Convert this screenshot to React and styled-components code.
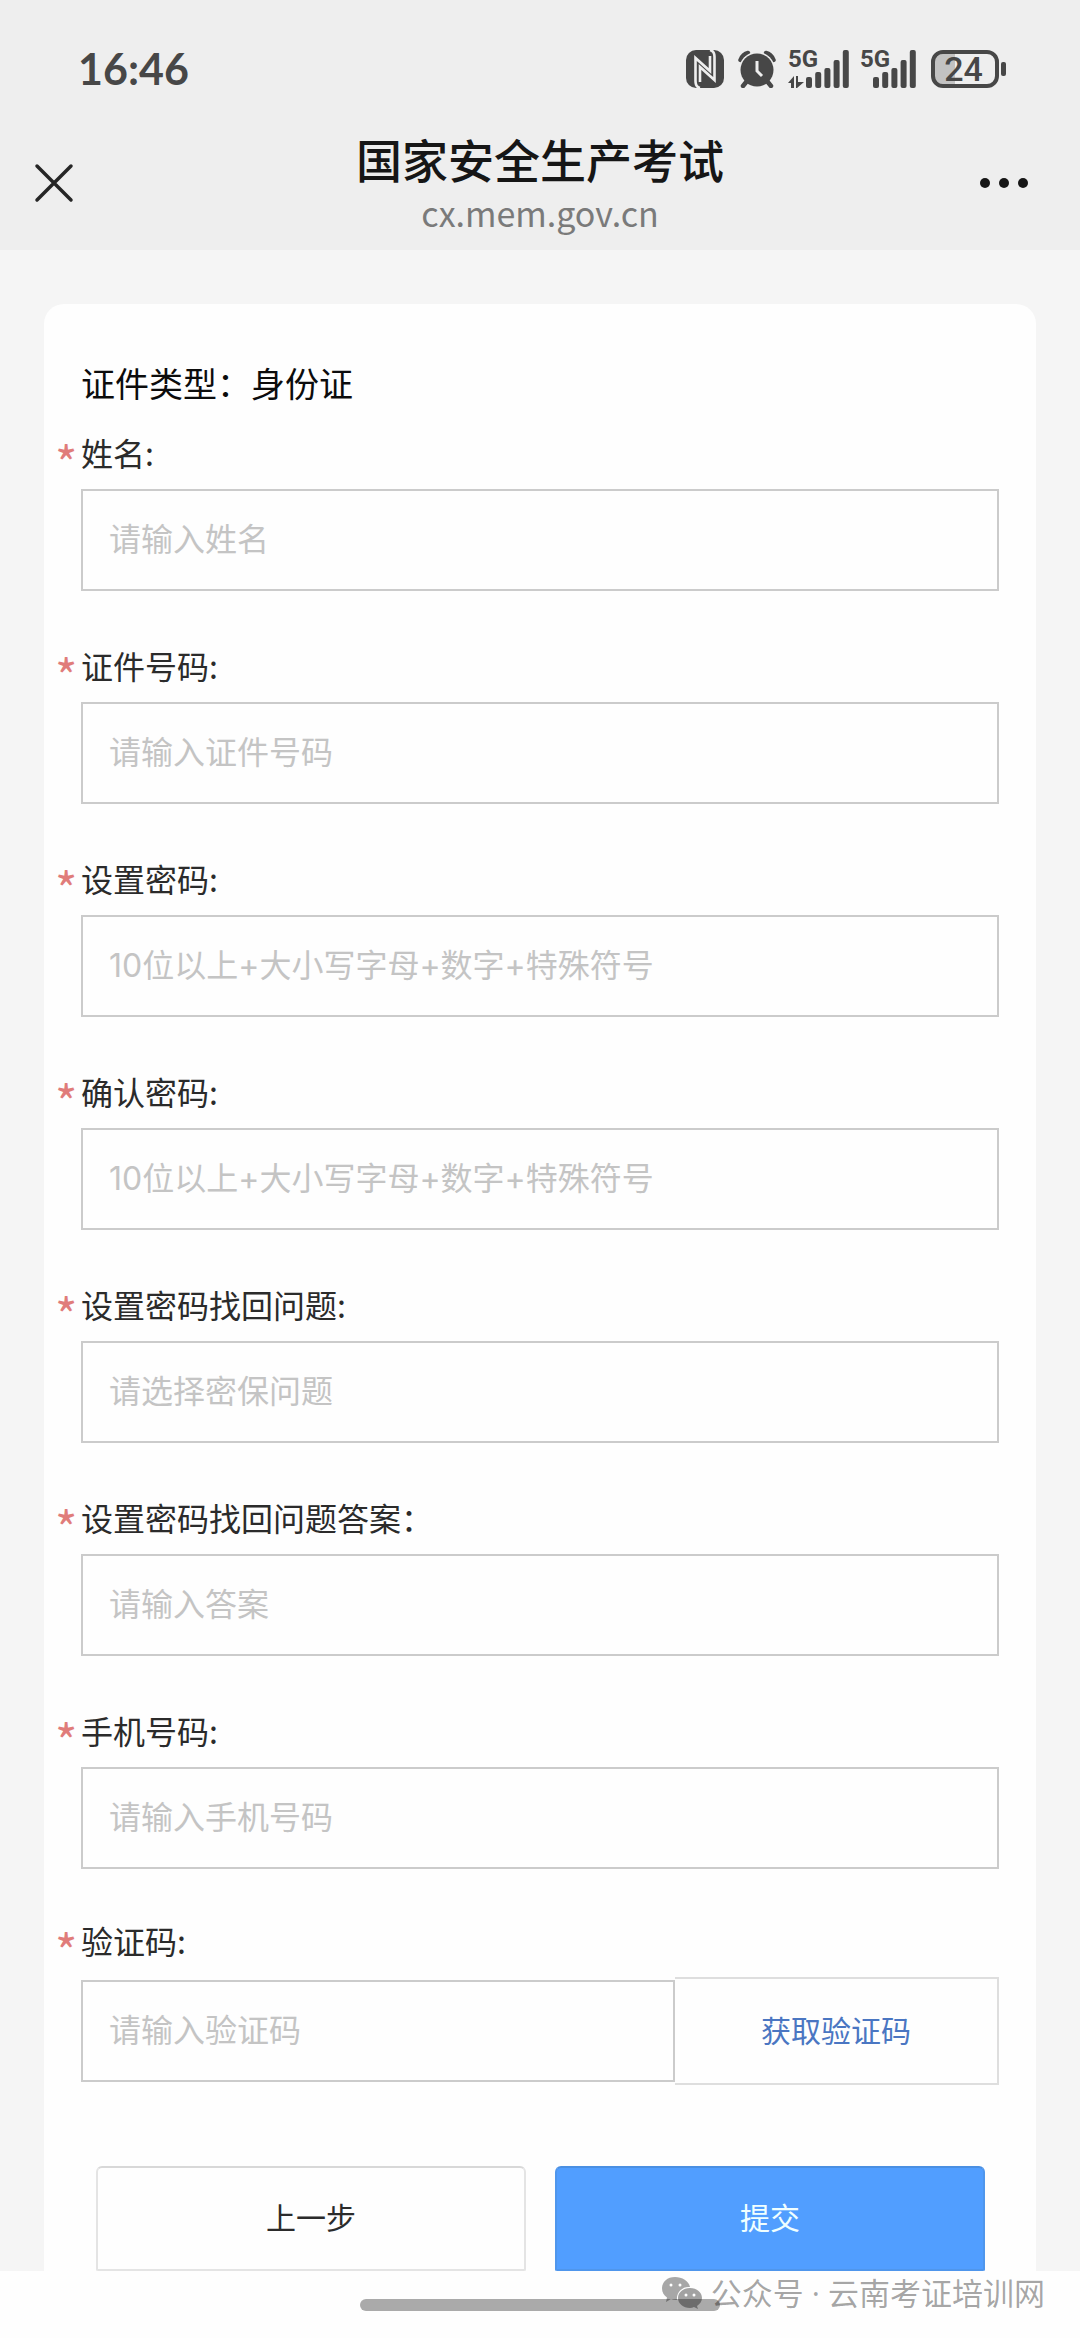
import React from "react";
import styled, { createGlobalStyle } from "styled-components";

const sans = `"Noto Sans CJK SC", "Noto Sans", sans-serif`;

const GlobalStyle = createGlobalStyle`
  *, *::before, *::after { box-sizing: border-box; }
  body { margin: 0; background: #fefefe; font-family: ${sans}; color: #2b2b2b; }
  button, input { font-family: inherit; margin: 0; }
`;

const Screen = styled.div`
  display: flex;
  flex-direction: column;
`;

const Header = styled.header`
  background: #eeeeee;
  height: 250px;
  display: flex;
  flex-direction: column;
`;

const StatusBar = styled.div`
  height: 116px;
  padding: 22px 74px 0 78px;
  display: flex;
  align-items: center;
  justify-content: space-between;
  color: #474747;
`;

const Clock = styled.time`
  font: 700 43px/52px Lato, sans-serif;
`;

const StatusIcons = styled.div`
  display: flex;
  align-items: center;
  height: 38px;

  svg { display: block; }
`;

const Nfc = styled.svg`
  margin-right: 14px;
`;

const Alarm = styled.svg`
  margin-right: 12px;
`;

const Signal = styled.div`
  position: relative;
  height: 38px;
  margin-right: ${(p) => p.$gap}px;
`;

const Network = styled.span`
  position: absolute;
  left: 0;
  top: 0;
  font: 700 24px/18px "Liberation Sans Narrow", Roboto, sans-serif;
`;

const Battery = styled.div`
  position: relative;
  width: 75px;
  height: 38px;
`;

const BatteryLevel = styled.span`
  position: absolute;
  inset: 0 10px 0 0;
  text-align: center;
  font: 500 34px/38px Roboto, sans-serif;
`;

const NavBar = styled.nav`
  flex: 1;
  padding: 0 48px 0 30px;
  display: grid;
  grid-template-columns: 60px 1fr 60px;
  align-items: center;
`;

const NavButton = styled.button`
  border: 0;
  padding: 0;
  background: none;
  height: 48px;
  display: flex;
  align-items: center;
  justify-content: ${(p) => p.$align};
`;

const Heading = styled.div`
  display: flex;
  flex-direction: column;
  align-items: center;
  height: 100%;
  padding: 12px 0 0 18px;
`;

const Title = styled.h1`
  margin: 0;
  font-size: 46px;
  line-height: 60px;
  font-weight: 500;
  color: #161616;
`;

const Site = styled.span`
  margin-top: 6px;
  font-size: 34px;
  line-height: 38px;
  color: #7a7a7a;
`;

const Page = styled.main`
  background: #f5f5f5;
  padding: 54px 44px 0;
`;

const Card = styled.form`
  background: #fefefe;
  border-radius: 20px 20px 0 0;
  padding: 56px 37px 0;
`;

const DocType = styled.p`
  margin: 0;
  font-size: 34px;
  line-height: 46px;
  color: #0c0c0c;
`;

const Field = styled.div`
  height: ${(p) => p.$height}px;
  display: flex;
  flex-direction: column;
  justify-content: flex-end;
`;

const Label = styled.label`
  display: grid;
  grid-template-columns: 26px 1fr;
  margin: 0 0 15px -26px;
  height: 44px;
  font-size: 32px;
  line-height: 44px;
`;

const Star = styled.span`
  font-size: 48px;
  line-height: 62px;
  color: #e07c7a;
`;

const TextBox = styled.input`
  width: 100%;
  min-width: 0;
  height: 102px;
  border: 2px solid #cbcbcb;
  border-radius: 0;
  background: transparent;
  padding: 0 26px 2px;
  font-family: Inter, ${sans};
  font-size: 32px;
  outline: 0;

  &::placeholder { color: #c4c4c4; opacity: 1; }
`;

const CodeRow = styled.div`
  display: grid;
  grid-template-columns: 594fr 324fr;
  align-items: center;
`;

const CodeButton = styled.button`
  height: 108px;
  border: 2px solid #dedede;
  border-left: 0;
  background: transparent;
  font-size: 30px;
  color: #4a76c2;
  padding: 0 0 5px;
`;

const Actions = styled.div`
  display: grid;
  grid-template-columns: 1fr 1fr;
  gap: 29px;
  padding: 81px 14px 0 15px;
`;

const Action = styled.button`
  height: 105px;
  padding: 0 0 5px;
  font-size: 30px;
  border-radius: 6px 6px 2px 2px;
  border: 2px solid ${(p) => (p.$primary ? "#4f96ec" : "#e4e4e4")};
  border-top-color: ${(p) => (p.$primary ? "#4a8fe2" : "#d8d8d8")};
  background: ${(p) => (p.$primary ? "#519eff" : "#fefefe")};
  color: ${(p) => (p.$primary ? "#f0ffff" : "#2b2b2b")};
`;

const Footer = styled.footer`
  position: relative;
  height: 67px;
  display: flex;
  justify-content: center;
  align-items: flex-start;
  padding-top: 28px;
`;

const HomeBar = styled.div`
  width: 360px;
  height: 12px;
  border-radius: 6px;
  background: #aaaaaa;
`;

const Watermark = styled.div`
  position: absolute;
  right: 35px;
  top: 0;
  height: 44px;
  display: flex;
  align-items: center;
  gap: 8px;
  font-family: "Open Sans", ${sans};
  font-size: 31px;
  line-height: 44px;
  color: rgba(0, 0, 0, 0.36);
`;

const bars = [
  [27, 11],
  [22, 16],
  [18, 20],
  [10, 28],
  [0, 38],
];

function SignalBars({ start, data }) {
  return (
    <svg width={start + 43} height="38" fill="#474747" aria-hidden="true">
      {bars.map(([y, h], i) => (
        <rect key={y} x={start + i * 9.2} y={y} width="6" height={h} rx="2" />
      ))}
      {data && <path d="M0 33l6-7v12H3v-5zM8 26h2v6h6l-7 6H8z" />}
    </svg>
  );
}

const fields = [
  { id: "name", label: "姓名:", hint: "请输入姓名" },
  { id: "number", label: "证件号码:", hint: "请输入证件号码" },
  { id: "password", label: "设置密码:", hint: "10位以上+大小写字母+数字+特殊符号", type: "password" },
  { id: "confirm", label: "确认密码:", hint: "10位以上+大小写字母+数字+特殊符号", type: "password" },
  { id: "question", label: "设置密码找回问题:", hint: "请选择密保问题" },
  { id: "answer", label: "设置密码找回问题答案：", hint: "请输入答案" },
  { id: "phone", label: "手机号码:", hint: "请输入手机号码", type: "tel" },
];

export default function App() {
  return (
    <Screen>
      <GlobalStyle />
      <Header>
        <StatusBar>
          <Clock>16:46</Clock>
          <StatusIcons>
            <Nfc width="38" height="38" viewBox="0 0 38 38" aria-label="NFC">
              <rect width="38" height="38" rx="10" fill="#474747" />
              <g fill="none" stroke="#eee" strokeWidth="2.6">
                <path d="M14 38Q9.500 37 9.500 31V8L24 21V6" />
                <path d="M24 0Q28.500 1 28.500 7V30L14 17V32" />
              </g>
            </Nfc>
            <Alarm width="38" height="38" viewBox="0 0 38 38" aria-label="闹钟">
              <g fill="none" stroke="#474747" strokeLinecap="round">
                <path d="M2.500 10Q5 4 10 3M35.500 10Q33 4 28 3" strokeWidth="4.500" />
                <path d="M9 31l-4 5M29 31l4 5" strokeWidth="4.500" />
              </g>
              <circle cx="19" cy="20" r="18" fill="#eee" clipPath="inset(0 0 14px 0)" />
              <circle cx="19" cy="20" r="16.500" fill="#474747" />
              <path d="M19 11v10l5 5" fill="none" stroke="#eee" strokeWidth="3" />
            </Alarm>
            <Signal $gap={11}>
              <Network>5G</Network>
              <SignalBars start={18} data />
            </Signal>
            <Signal $gap={15}>
              <Network>5G</Network>
              <SignalBars start={13} />
            </Signal>
            <Battery>
              <svg width="75" height="38" aria-hidden="true">
                <path d="M12 4h12v30H12a9 9 0 0 1-9-9V13a9 9 0 0 1 9-9z" fill="#c2c2c2" />
                <rect x="2" y="2" width="64" height="34" rx="10" fill="none" stroke="#474747" strokeWidth="4" />
                <rect x="70" y="12" width="5" height="14" rx="2" fill="#474747" />
              </svg>
              <BatteryLevel>24</BatteryLevel>
            </Battery>
          </StatusIcons>
        </StatusBar>
        <NavBar>
          <NavButton type="button" aria-label="关闭" $align="flex-start">
            <svg width="48" height="48" viewBox="0 0 48 48">
              <path d="M7 7l34 34M41 7L7 41" stroke="#262626" strokeWidth="3.500" strokeLinecap="round" />
            </svg>
          </NavButton>
          <Heading>
            <Title>国家安全生产考试</Title>
            <Site>cx.mem.gov.cn</Site>
          </Heading>
          <NavButton type="button" aria-label="更多" $align="flex-end">
            <svg width="56" height="12" fill="#161616">
              <circle cx="9" cy="6" r="5" />
              <circle cx="28" cy="6" r="5" />
              <circle cx="47" cy="6" r="5" />
            </svg>
          </NavButton>
        </NavBar>
      </Header>
      <Page>
        <Card onSubmit={(e) => e.preventDefault()}>
          <DocType>证件类型：身份证</DocType>
          {fields.map((f, i) => (
            <Field key={f.id} $height={i === 0 ? 185 : 213}>
              <Label htmlFor={f.id}>
                <Star>*</Star>
                {f.label}
              </Label>
              <TextBox id={f.id} type={f.type || "text"} placeholder={f.hint} />
            </Field>
          ))}
          <Field $height={216}>
            <Label htmlFor="code">
              <Star>*</Star>
              验证码:
            </Label>
            <CodeRow>
              <TextBox id="code" type="text" placeholder="请输入验证码" />
              <CodeButton type="button">获取验证码</CodeButton>
            </CodeRow>
          </Field>
          <Actions>
            <Action type="button">上一步</Action>
            <Action type="submit" $primary>提交</Action>
          </Actions>
        </Card>
      </Page>
      <Footer>
        <HomeBar />
        <Watermark>
          <svg width="42" height="34" viewBox="0 0 42 34" aria-hidden="true">
            <path d="M14 1C6 1 1 6 1 12.500c0 4 2 7 5 9L5 26l5-3q2 1 5 1h1c-1-8 6-14 13-13C28 5 21 1 14 1z" fill="rgba(0,0,0,.34)" />
            <path d="M29 12c-7 0-12 4.500-12 10s5 10 12 10q2 0 4-1l4 2-1-3c3-2 5-5 5-8 0-5.500-5-10-12-10z" fill="rgba(0,0,0,.36)" />
            <g fill="#fff">
              <circle cx="10" cy="9" r="1.500" />
              <circle cx="19" cy="9" r="1.500" />
              <circle cx="25" cy="19" r="1.500" />
              <circle cx="33" cy="19" r="1.500" />
            </g>
          </svg>
          公众号 · 云南考证培训网
        </Watermark>
      </Footer>
    </Screen>
  );
}
